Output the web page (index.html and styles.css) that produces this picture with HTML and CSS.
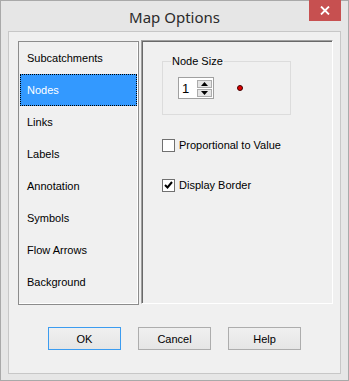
FILE: index.html
```html
<!DOCTYPE html>
<html lang="en">
<head>
    <title>Map Options</title>
    <link rel="stylesheet" href="styles.css">
</head>
<body>
    <div class="window">
        <div class="titlebar">
            <span class="title">Map Options</span>
            <button class="close">
                <svg width="10" height="9" viewBox="0 0 10 9"><path d="M1 0.5 L9 8.5 M9 0.5 L1 8.5" stroke="#fff" stroke-width="1.8"/></svg>
            </button>
        </div>
        <div class="client">
            <div class="main">
                <ul class="listbox">
                    <li>Subcatchments</li>
                    <li class="selected">Nodes</li>
                    <li>Links</li>
                    <li>Labels</li>
                    <li>Annotation</li>
                    <li>Symbols</li>
                    <li>Flow Arrows</li>
                    <li>Background</li>
                </ul>
                <div class="page">
                    <fieldset class="group">
                        <legend>Node Size</legend>
                        <div class="size-row">
                            <div class="spin">
                                <span class="spin-value">1</span>
                                <div class="spin-buttons">
                                    <span class="spin-btn"><svg width="7" height="4" viewBox="0 0 7 4"><path d="M3.5 0 L7 4 L0 4 Z" fill="#000"/></svg></span>
                                    <span class="spin-btn"><svg width="7" height="4" viewBox="0 0 7 4"><path d="M0 0 L7 0 L3.5 4 Z" fill="#000"/></svg></span>
                                </div>
                            </div>
                            <span class="dot"></span>
                        </div>
                    </fieldset>
                    <label class="check"><span class="box"></span>Proportional to Value</label>
                    <label class="check"><span class="box checked"><svg width="9" height="8" viewBox="0 0 9 8"><path d="M1 4 L3.5 6.5 L8 1" stroke="#000" stroke-width="2" fill="none"/></svg></span>Display Border</label>
                </div>
            </div>
            <div class="buttons">
                <button class="btn default">OK</button>
                <button class="btn">Cancel</button>
                <button class="btn">Help</button>
            </div>
        </div>
    </div>
</body>
</html>
```
FILE: styles.css
```css
body{
    margin: 0;
    font-family: "Liberation Sans", Arial, sans-serif;
    font-size: 11px;
    color: #000;
}
.window{
    width: 349px;
    height: 381px;
    box-sizing: border-box;
    border: 1px solid #a9a9a9;
    background-color: #e6e6e6;
    display: flex;
    flex-direction: column;
}
.titlebar{
    position: relative;
    height: 30px;
    display: flex;
    align-items: center;
    justify-content: center;
}
.title{
    font-family: "Noto Sans", sans-serif;
    font-size: 15px;
    color: #2b2b2b;
    margin-top: 1px;
}
.close{
    position: absolute;
    top: -1px;
    right: 7px;
    width: 32px;
    height: 21px;
    border: none;
    padding: 0;
    background-color: #c75050;
    display: flex;
    align-items: center;
    justify-content: center;
}
.client{
    margin: 0 7px 6px 7px;
    height: 343px;
    box-sizing: border-box;
    border: 1px solid #c7c7c7;
    background-color: #f0f0f0;
    padding: 8px 0 0 9px;
}
.main{
    display: flex;
    gap: 2px;
}
.listbox{
    list-style: none;
    margin: 1px 0 0 0;
    padding: 0 0 7px 1px;
    width: 121px;
    height: 264px;
    box-sizing: border-box;
    border: 1px solid #8c8c8c;
    box-shadow: inset -1px -1px #fff;
}
.listbox li{
    height: 32px;
    line-height: 32px;
    padding-left: 7px;
}
.listbox .selected{
    background-color: #3399ff;
    color: #fff;
    outline: 1px dotted #000;
    outline-offset: -1px;
    margin-right: 1px;
}
.page{
    width: 192px;
    height: 264px;
    box-sizing: border-box;
    border-left: 1px solid #a0a0a0;
    border-top: 1px solid #a0a0a0;
    border-right: 1px solid #fff;
    border-bottom: 1px solid #fff;
    box-shadow: inset 1px 1px #696969;
    padding: 14px 0 0 20px;
    display: flex;
    flex-direction: column;
}
.group{
    width: 129px;
    height: 60px;
    box-sizing: border-box;
    margin: 0;
    border: 1px solid #dcdcdc;
    padding: 0 0 0 15px;
}
.group legend{
    padding: 0 1px;
    margin-left: -7px;
}
.size-row{
    display: flex;
    align-items: center;
    margin-top: 10px;
}
.spin{
    width: 36px;
    height: 22px;
    box-sizing: border-box;
    border: 1px solid #a0a0a0;
    background-color: #fff;
    display: flex;
    align-items: center;
    justify-content: space-between;
    padding: 0 1px 0 3px;
}
.spin-value{
    font-size: 13px;
}
.spin-buttons{
    display: flex;
    flex-direction: column;
    gap: 1px;
}
.spin-btn{
    width: 15px;
    height: 8px;
    box-sizing: border-box;
    border: 1px solid #acacac;
    background-color: #e5e5e5;
    display: flex;
    align-items: center;
    justify-content: center;
}
.dot{
    width: 4px;
    height: 4px;
    border-radius: 50%;
    background-color: #e00000;
    border: 1px solid #400000;
    margin-left: 23px;
}
.check{
    display: flex;
    align-items: center;
    gap: 4px;
    height: 14px;
}
.group + .check{
    margin-top: 23px;
}
.check + .check{
    margin-top: 26px;
}
.box{
    width: 13px;
    height: 13px;
    box-sizing: border-box;
    border: 1px solid #707070;
    background-color: #fff;
    display: flex;
    align-items: center;
    justify-content: center;
}
.buttons{
    display: flex;
    gap: 17px;
    margin-top: 22px;
    padding-left: 30px;
}
.btn{
    width: 73px;
    height: 23px;
    font-family: "Liberation Sans", Arial, sans-serif;
    font-size: 11px;
    color: #000;
    border: 1px solid #adadad;
    background: linear-gradient(#f0f0f0, #e5e5e5);
    padding: 0;
}
.btn.default{
    border-color: #3c9cf0;
}
```
